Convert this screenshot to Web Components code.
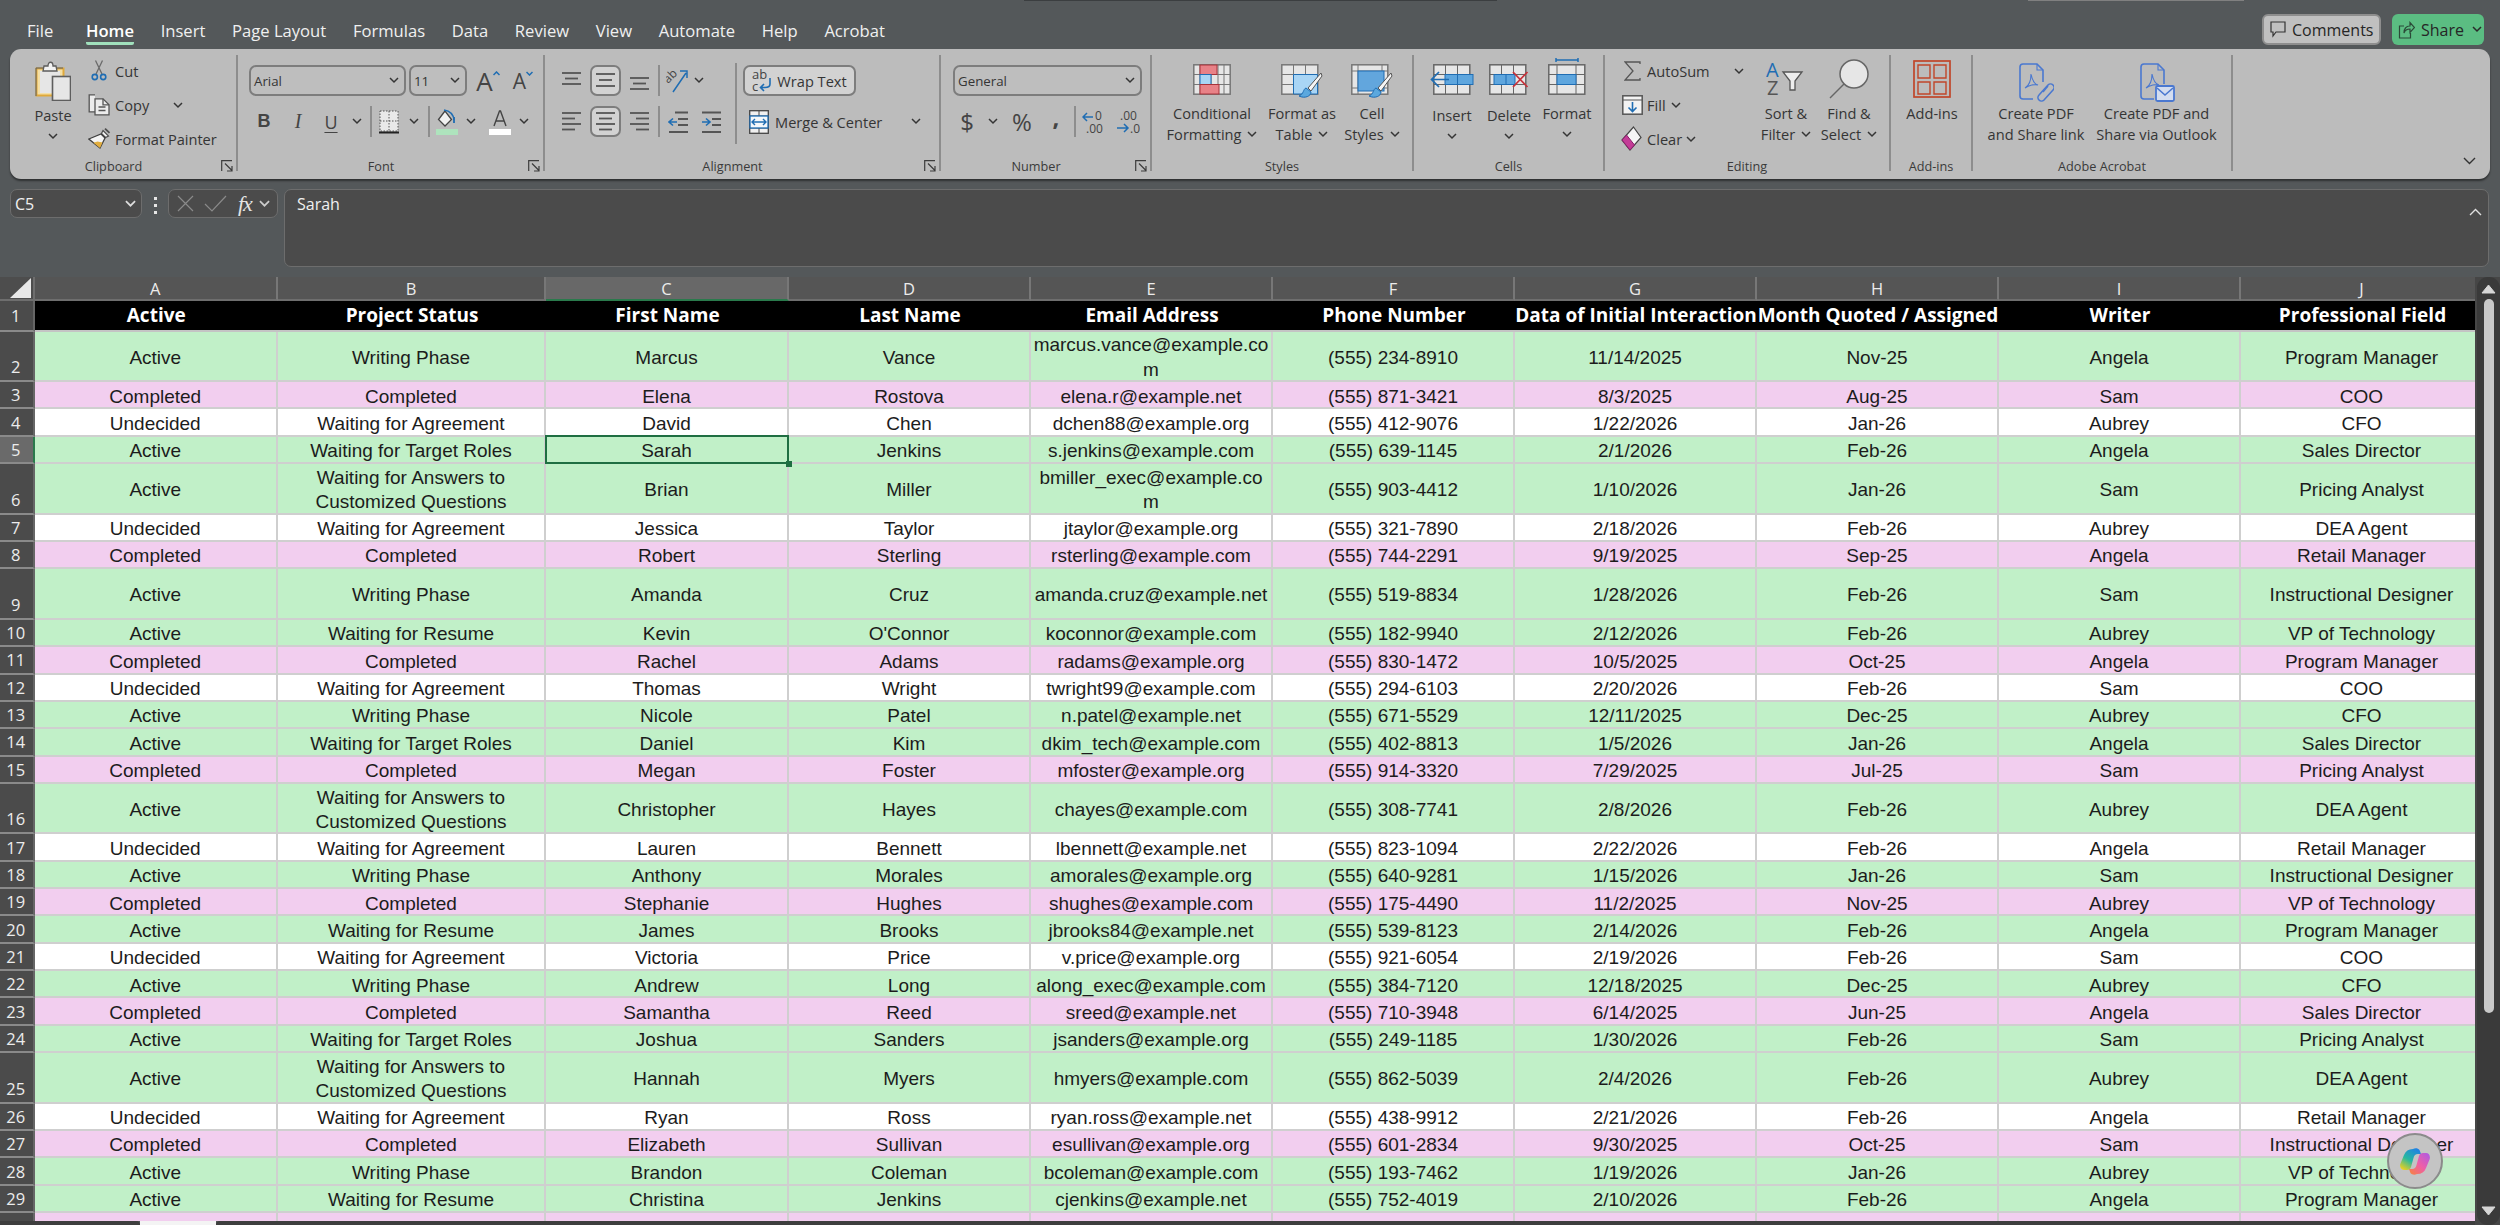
<!DOCTYPE html>
<html lang="en"><head><meta charset="utf-8"><title>Excel</title>
<style>
html,body{margin:0;height:1225px;overflow:hidden;background:#54585a}
body{font-family:"Open Sans","Liberation Sans",sans-serif}
xl-app{width:2500px;height:1225px}
</style></head><body>
<xl-app>
  <xl-tabbar></xl-tabbar>
  <xl-ribbon></xl-ribbon>
  <xl-formula cell="C5" value="Sarah"></xl-formula>
  <xl-sheet></xl-sheet>
</xl-app>
<script>
const INK='#353535',GR='#666',LT='#e6e6e6',BL='#1f6db3';
const CH=(c=INK)=>`<svg width="10" height="7" viewBox="0 0 10 7"><path d="M1 1l4 4 4-4" fill="none" stroke="${c}" stroke-width="1.5"/></svg>`;
const vsep=(h=31)=>`<i class="vs" style="height:${h}px"></i>`;

/* ---- layout helpers: a row of items placed by margins in flow ---- */
function line(h,x0,items,mt=0){
  let p=x0,s='';
  for(const [x,w,html,cls=''] of items){
    s+=`<span class="it ${cls}" style="margin-left:${x-p}px;width:${w}px">${html}</span>`;p=x+w;
  }
  return `<div class="ln" style="height:${h}px;margin-top:${mt}px">${s}</div>`;
}
function big(iconTop,icon,labels,lt=0){
  const ls=labels.map(l=>`<span class="bl">${l}</span>`).join('');
  return `<div class="big"><div class="bi" style="padding-top:${iconTop-55}px;height:${48-(iconTop-55)}px">${icon}</div><div class="bt" style="margin-top:${lt}px">${ls}</div></div>`;
}
const wc=(t)=>`${t}<span class="cg">${CH()}</span>`;

/* ---- icons ---- */
const I={
paste:`<svg width="36" height="40" viewBox="0 0 36 40"><path d="M1.5 7.5h27v27h-27z" fill="#f4dfa6" stroke="#e0a93a" stroke-width="2"/><path d="M1 7h27M1 7v28" stroke="#5c5c5c" stroke-width="1"/><rect x="5" y="10" width="20" height="22" fill="${LT}"/><path d="M9 5h4c0-5 5-5 5 0h3l1 5H8z" fill="#f2f2f2" stroke="#5c5c5c" stroke-width="1.3"/><rect x="17.5" y="15.5" width="18" height="24" fill="${LT}" stroke="#5e5e5e" stroke-width="1.6"/></svg>`,
cut:`<svg width="16" height="22" viewBox="0 0 16 22"><path d="M4.500 0.500L11 14M11.500 0.500L5 14" fill="none" stroke="#6a6a6a" stroke-width="1.300"/><circle cx="3.800" cy="17" r="2.600" fill="none" stroke="${BL}" stroke-width="1.600"/><circle cx="12.200" cy="17" r="2.600" fill="none" stroke="${BL}" stroke-width="1.600"/></svg>`,
copy:`<svg width="23" height="22" viewBox="0 0 23 22"><path d="M7 .8H1.200v17H7" fill="#ececec" stroke="#555" stroke-width="1.300"/><path d="M7 4.800h8l6 6v10H7z" fill="#ececec" stroke="#555" stroke-width="1.300"/><path d="M15 4.800v6h6M10.500 13h7M10.500 16.500h7" fill="none" stroke="#555" stroke-width="1.300"/></svg>`,
painter:`<svg width="23" height="22" viewBox="0 0 23 22"><path d="M15 2.500l5.500 5.500-3 1.500-4-4z" fill="#f4f4f4" stroke="#4f4f4f" stroke-width="1.200"/><path d="M17 .7l4.500 4.200" stroke="#4f4f4f" stroke-width="1.800"/><path d="M13 6l4 4-5 10L.8 11z" fill="#f4f4f4" stroke="#3d3d3d" stroke-width="1.200"/><path d="M5.500 14.800L12 20l2.500-5.500-5-1z" fill="#e3ae3e"/></svg>`,
launcher:`<svg width="12" height="12" viewBox="0 0 12 12"><path d="M.7 11V.7H11M4 3.500l7 7M6 11h5V6" fill="none" stroke="#3c3c3c" stroke-width="1.200"/></svg>`,
grow:`<span class="ga">A<svg width="7" height="5" viewBox="0 0 7 5"><path d="M.5 4l3-3 3 3" fill="none" stroke="${BL}" stroke-width="1.500"/></svg></span>`,
shrink:`<span class="ga sm">A<svg width="7" height="5" viewBox="0 0 7 5"><path d="M.5 1l3 3 3-3" fill="none" stroke="${BL}" stroke-width="1.500"/></svg></span>`,
borders:`<svg width="20" height="24" viewBox="0 0 20 24"><path d="M1 1h18v20H1zM1 11h18M10 1v20" fill="#e9e9e9" stroke="#555" stroke-dasharray="1.500 1.500"/><path d="M0 22.500h20" stroke="#222" stroke-width="2"/></svg>`,
fill:`<svg width="22" height="26" viewBox="0 0 22 26"><path d="M9 2L2.500 10.500 9 17l6.500-6.500z" fill="#f1f1f1" stroke="#444" stroke-width="1.300"/><path d="M8 1c6 1 9.500 5 10 10" fill="none" stroke="${BL}" stroke-width="1.500"/><path d="M18 8v6" stroke="${BL}" stroke-width="1.800"/><rect y="20" width="22" height="6" fill="#aee3bd"/></svg>`,
fontcolor:`<svg width="22" height="26" viewBox="0 0 22 26"><path d="M5 17L10.500 2h1L17 17M7 12h8" fill="none" stroke="#444" stroke-width="1.400"/><rect y="20" width="22" height="6" fill="#fff"/></svg>`,
wrap:`<svg width="20" height="26" viewBox="0 0 20 26"><text x="0" y="11" font-family="Open Sans" font-size="13" fill="#444">ab</text><text x="0" y="23" font-family="Open Sans" font-size="13" fill="#444">c</text><path d="M18 10v6c0 3-3 3.500-5 3.500H9M12 16l-3.500 3.500L12 23" fill="none" stroke="${BL}" stroke-width="1.600"/></svg>`,
merge:`<svg width="20" height="24" viewBox="0 0 20 24"><rect x=".7" y=".7" width="18.600" height="22.600" fill="#f0f0f0" stroke="#444" stroke-width="1.300"/><path d="M1 6h18M1 18h18M10 1v5M10 18v5" stroke="#444"/><rect x="1" y="6" width="18" height="12" fill="#f4f8fb" stroke="${BL}" stroke-width="1.300"/><path d="M3 12h14M6 9l-3 3 3 3M14 9l3 3-3 3" fill="none" stroke="${BL}" stroke-width="1.400"/></svg>`,
orient:`<svg width="22" height="24" viewBox="0 0 22 24"><text transform="translate(2 15) rotate(-45)" font-family="Open Sans" font-size="12" fill="#444">ab</text><path d="M7 23L20 4M14 2h7v7" fill="none" stroke="${BL}" stroke-width="1.500"/></svg>`,
indL:`<svg width="20" height="22" viewBox="0 0 20 22"><path d="M7 1.500h13M10 8h10M10 14h10M1 21h19" stroke="#555" stroke-width="1.800"/><path d="M1 11h8M5 7.500L1 11l4 3.500" fill="none" stroke="${BL}" stroke-width="1.600"/></svg>`,
indR:`<svg width="20" height="22" viewBox="0 0 20 22"><path d="M1 1.500h19M11 8h9M11 14h9M1 21h19" stroke="#555" stroke-width="1.800"/><path d="M1 11h8M5 7.500L9 11l-4 3.500" fill="none" stroke="${BL}" stroke-width="1.600"/></svg>`,
decL:`<svg width="24" height="24" viewBox="0 0 24 24"><text x="13" y="10" font-family="Open Sans" font-size="12" fill="#444">0</text><text x="4" y="23" font-family="Open Sans" font-size="12" fill="#444">.00</text><path d="M1 7h10M5 3L1 7l4 4" fill="none" stroke="${BL}" stroke-width="1.500"/></svg>`,
decR:`<svg width="24" height="24" viewBox="0 0 24 24"><text x="4" y="10" font-family="Open Sans" font-size="12" fill="#444">.00</text><text x="14" y="23" font-family="Open Sans" font-size="12" fill="#444">.0</text><path d="M1 18h11M8 14l4 4-4 4" fill="none" stroke="${BL}" stroke-width="1.500"/></svg>`,
cond:`<svg width="38" height="31" viewBox="0 0 38 31"><rect x=".8" y=".8" width="36.400" height="29.400" fill="${LT}" stroke="#777" stroke-width="1.500"/><path d="M7 1v29M18 1v29M25 1v29M31 1v29M1 10.500h36M1 20.500h36" stroke="#777"/><rect x="7" y="1" width="17" height="9.500" fill="#e88187" stroke="#a8323a"/><rect x="7" y="10.500" width="11" height="10" fill="#a9d5f5" stroke="${BL}"/><rect x="7" y="20.500" width="19" height="9.500" fill="#e88187" stroke="#a8323a"/></svg>`,
table:`<svg width="42" height="38" viewBox="0 0 42 38"><rect x=".8" y=".8" width="36" height="29.400" fill="${LT}" stroke="#777" stroke-width="1.500"/><path d="M12.500 1v29M24.500 1v29M1 10.500h36M1 20.500h36" stroke="#777"/><rect x="12.500" y="10.500" width="24" height="19.500" fill="#a9d5f5"/><path d="M12.500 10.500h24v19.500h-24z" fill="none" stroke="${BL}"/><path d="M40 9L27 24l3 3L41 12z" fill="#f5f5f5" stroke="#555"/><path d="M25 24c-3 1-2 6-7 8 6 3 12 0 12-4z" fill="#5ba8de" stroke="${BL}"/></svg>`,
cellst:`<svg width="42" height="38" viewBox="0 0 42 38"><rect x=".8" y=".8" width="36" height="29.400" fill="${LT}" stroke="#777" stroke-width="1.500"/><path d="M7 1v29M31 1v8M1 7h36M1 24h36" stroke="#777"/><rect x="7" y="7" width="26" height="20" fill="#62a6dd" stroke="${BL}"/><path d="M40 9L27 24l3 3L41 12z" fill="#f5f5f5" stroke="#555"/><path d="M25 24c-3 1-2 6-7 8 6 3 12 0 12-4z" fill="#5ba8de" stroke="${BL}"/></svg>`,
insert:`<svg width="44" height="31" viewBox="0 0 44 31"><rect x="3.800" y=".8" width="36" height="29.400" fill="${LT}" stroke="#666" stroke-width="1.500"/><path d="M15.500 1v29M27.500 1v29M4 10.500h36M4 20.500h36" stroke="#666"/><rect x="15" y="10.500" width="28" height="10" fill="#5ea6de" stroke="${BL}"/><path d="M27.500 10.500v10" stroke="${BL}"/><path d="M19 15.500H2M9 8l-7.500 7.500L9 23" fill="none" stroke="${BL}" stroke-width="1.700"/></svg>`,
del:`<svg width="40" height="31" viewBox="0 0 40 31"><rect x=".8" y=".8" width="36" height="29.400" fill="${LT}" stroke="#666" stroke-width="1.500"/><path d="M12.500 1v29M24.500 1v29M1 10.500h36M1 20.500h36" stroke="#666"/><rect x="5" y="10.500" width="21" height="10" fill="#5ea6de" stroke="${BL}"/><path d="M17 10.500v10" stroke="${BL}"/><path d="M24 8l14.500 15M38.500 8L24 23" stroke="#c8323a" stroke-width="1.700"/></svg>`,
format:`<svg width="38" height="38" viewBox="0 0 38 38"><path d="M8 1v4M30 1v4M8 3h22" stroke="${BL}" stroke-width="1.500"/><rect x=".8" y="7.800" width="36" height="29.400" fill="${LT}" stroke="#666" stroke-width="1.500"/><path d="M9 8v29M28 8v29M1 17.500h36M1 27.500h36" stroke="#666"/><rect x="9" y="17.500" width="19" height="10" fill="#5ea6de" stroke="${BL}"/></svg>`,
sigma:`<svg width="17" height="20" viewBox="0 0 17 20"><path d="M16 3V1H1l8 9-8 9h15v-2" fill="none" stroke="#555" stroke-width="1.300"/></svg>`,
fillIc:`<svg width="21" height="20" viewBox="0 0 21 20"><rect x=".8" y=".8" width="19.400" height="18.400" fill="#f3f3f3" stroke="#555" stroke-width="1.500"/><path d="M1 5h19" stroke="#555"/><path d="M10.500 7v9M6.500 12.500l4 4 4-4" fill="none" stroke="${BL}" stroke-width="1.600"/></svg>`,
clear:`<svg width="21" height="26" viewBox="0 0 21 26"><path d="M12.500 1L20 11.500 9 24 1 14z" fill="#f5f5f5" stroke="#444" stroke-width="1.200"/><path d="M5.500 9L13.500 19 9 24 1 14z" fill="#c43c97" stroke="#8a1f6a"/></svg>`,
sort:`<svg width="40" height="36" viewBox="0 0 40 36"><text x="0" y="16" font-family="Open Sans" font-size="20" fill="${BL}">A</text><text x="1" y="34" font-family="Open Sans" font-size="20" fill="#555">Z</text><path d="M17 11h19l-7 9v9h-5v-9z" fill="#ededed" stroke="#555" stroke-width="1.300"/></svg>`,
find:`<svg width="40" height="40" viewBox="0 0 40 40"><circle cx="25" cy="15" r="14" fill="${LT}" stroke="#666" stroke-width="1.500"/><path d="M15 25L1 39" stroke="#666" stroke-width="1.500"/></svg>`,
addins:`<svg width="38" height="38" viewBox="0 0 38 38"><rect x="1" y="1" width="36" height="36" fill="none" stroke="#c0462a" stroke-width="1.700"/><path d="M5 5h12v13H5zM21 5h12v13H21zM5 22h12v12H5zM21 22h12v12H21z" fill="none" stroke="#c0462a" stroke-width="1.400"/></svg>`,
pdfL:`<svg width="36" height="40" viewBox="0 0 36 40"><path d="M15 37H5a3 3 0 0 1-3-3V5a3 3 0 0 1 3-3h14l6 6v12" fill="none" stroke="#4a78d0" stroke-width="1.600"/><path d="M19 2v6h6M7 26c5-3 6-10 6-14 1 5 3 10 7 11-3-1-9 0-13 3z" fill="none" stroke="#4a78d0" stroke-width="1.100"/><path d="M21 33l9-10a3.500 3.500 0 0 1 5 5l-9 10a3.500 3.500 0 0 1-5-5z" fill="none" stroke="#4a78d0" stroke-width="1.600"/><path d="M25 30l5-6" stroke="#4a78d0" stroke-width="1.400"/></svg>`,
pdfM:`<svg width="36" height="40" viewBox="0 0 36 40"><path d="M15 37H5a3 3 0 0 1-3-3V5a3 3 0 0 1 3-3h14l6 6v14" fill="none" stroke="#4a78d0" stroke-width="1.600"/><path d="M19 2v6h6M7 26c5-3 6-10 6-14 1 5 3 10 7 11-3-1-9 0-13 3z" fill="none" stroke="#4a78d0" stroke-width="1.100"/><rect x="17" y="24" width="18" height="15" rx="1.500" fill="#d3ddf0" stroke="#4a78d0" stroke-width="1.800"/><path d="M18 26l8 7 8-7" fill="none" stroke="#4a78d0" stroke-width="1.600"/></svg>`
};
const aligned=(t)=>{
  const y={top:[1,6.5,12],mid:[2,8,14],bot:[6,11.500,17]}[t];
  let s='';
  y.forEach((v,i)=>{const ln=i==1?13:19;s+=`<path d="M${(19-ln)/2} ${v}h${ln}" stroke="#555" stroke-width="1.800"/>`});
  return `<svg width="19" height="18" viewBox="0 0 19 18">${s}</svg>`;
};
const halign=(a)=>{
  const rows=[19,13,19,13],y=[1,6.5,12,17.5];let s='';
  rows.forEach((ln,i)=>{const x=a==='l'?0:a==='r'?19-ln:(19-ln)/2;s+=`<path d="M${x} ${y[i]}h${ln}" stroke="#555" stroke-width="1.800"/>`});
  return `<svg width="19" height="19" viewBox="0 0 19 19">${s}</svg>`;
};

/* ---- elements ---- */
class XlApp extends HTMLElement{
  constructor(){super();this.attachShadow({mode:'open'}).innerHTML=`<style>:host{display:flex;flex-direction:column;color:#eee}</style><slot></slot>`}
}
class XlTabbar extends HTMLElement{
  constructor(){super();
    const tabs=['File','Home','Insert','Page Layout','Formulas','Data','Review','View','Automate','Help','Acrobat'];
    this.attachShadow({mode:'open'}).innerHTML=`<style>
    :host{display:block;height:49px;font-family:"Open Sans",sans-serif}
    .edge{display:flex;height:1px}
    .edge i{display:block;height:1px}
    .bar{display:flex;justify-content:space-between;height:48px}
    .tabs{display:flex;gap:26.7px;padding-left:27px}
    .t{height:22px;margin-top:19px;font-size:16.6px;line-height:22px;color:#f0f0f0;white-space:nowrap;border-bottom:0 solid}
    .t.first{margin-right:6px}
    .t.on{font-weight:600;color:#fff;border-bottom:3px solid #a0e0bc;border-radius:0 0 2px 2px}
    .act{display:flex;gap:11px;padding:13px 16px 0 0}
    .b{height:31px;box-sizing:border-box;border-radius:6px;font-size:16px;color:#262626;display:flex;align-items:center;gap:6px}
    .c{width:119px;background:#c0c0c0;border:2px solid #8e8e8e;padding-left:6px}
    .s{width:92px;background:#5bbd82;padding-left:6px}
    </style>
    <div class="edge"><i style="margin-left:1024px;width:473px;background:#3b3e40"></i><i style="margin-left:531px;width:216px;background:#808080"></i></div>
    <div class="bar"><div class="tabs">${tabs.map(t=>`<div class="t ${t==='Home'?'on':''} ${t==='File'?'first':''}">${t}</div>`).join('')}</div>
    <div class="act"><div class="b c"><svg width="16" height="17" viewBox="0 0 16 17"><path d="M1 1h14v10H6l-3 4v-4H1z" fill="none" stroke="#333" stroke-width="1.200"/></svg>Comments</div>
    <div class="b s"><svg width="17" height="18" viewBox="0 0 17 18"><path d="M6 5H1.500v12h11v-5M6 12c0-5 3-7 6-7V1.500l4.500 5-4.500 5V8c-3 0-5 1-6 4z" fill="none" stroke="#2b4a38" stroke-width="1.200"/></svg>Share<span style="margin-left:2px;display:flex">${CH('#2a2a2a')}</span></div></div></div>`;
  }
}
class XlGroup extends HTMLElement{
  constructor(){super();this.attachShadow({mode:'open'})}
  connectedCallback(){
    const L=this.hasAttribute('launcher');
    this.shadowRoot.innerHTML=`<style>
    :host{display:block;box-sizing:border-box;width:${this.getAttribute('w')}px;height:116px;border-right:2px solid #8d8d8d;flex:none}
    .body{height:101px;display:flow-root}
    .foot{display:flex;height:15px}
    .lab{flex:1;text-align:center;font-size:12.7px;line-height:20px;height:15px;color:#3a3a3a}
    .lau{width:19px;display:flex;justify-content:center;padding-top:4px}
    </style><div class="body"><slot></slot></div><div class="foot"><div class="lab">${this.getAttribute('label')}</div>${L?`<div class="lau">${I.launcher}</div>`:''}</div>`;
  }
}
class XlRibbon extends HTMLElement{
  constructor(){super();
    const sel=(txt)=>`<span class="cb"><span>${txt}</span>${CH()}</span>`;
    const press=(ic)=>`<span class="pr">${ic}</span>`;
    const t=(s)=>`<span class="tx">${s}</span>`;
    this.attachShadow({mode:'open'}).innerHTML=`<style>
    :host{display:flex;box-sizing:border-box;margin-left:10px;width:2480px;height:130px;padding-top:6px;background:#bcbcbc;border-radius:11px;box-shadow:0 2px 2px rgba(0,0,0,.45);font-family:"Open Sans",sans-serif;color:${INK};font-size:14.6px}
    .ln{display:flex;align-items:center;white-space:nowrap}
    .it{display:flex;align-items:center;justify-content:center;flex:none;height:100%}
    .it.l{justify-content:flex-start}
    .it.top{align-items:flex-start}
    .cols{display:flex}
    .vs{display:block;width:1.500px;background:#8d8d8d;flex:none}
    .cb{box-sizing:border-box;width:100%;height:100%;border:2px solid #7d7d7d;border-radius:7px;display:flex;align-items:center;justify-content:space-between;padding:0 5px 0 3px;font-size:13.3px;background:#bebebe}
    .pr{box-sizing:border-box;width:100%;height:100%;border:2px solid #7d7d7d;border-radius:7px;background:#d2d2d2;display:flex;align-items:center;justify-content:center;gap:4px}
    .big{display:flex;flex-direction:column;align-items:center;width:100%;height:100%}
    .bi{display:flex;align-items:flex-start;justify-content:center;flex:none}
    .bt{display:flex;flex-direction:column;align-items:center}
    .bl{height:21px;line-height:21px;white-space:nowrap;display:flex;align-items:center;font-size:14.6px}
    .cg{display:inline-flex;margin-left:6px}
    .ga{font-size:26px;line-height:26px;color:#444;display:flex;align-items:flex-start}
    .ga.sm{font-size:21px;line-height:26px}
    .ga svg{margin-top:3px}
    .bold{font-family:"Liberation Sans",sans-serif;font-weight:700;font-size:18px;color:#444}
    .ital{font-family:"Liberation Serif",serif;font-style:italic;font-size:20px;color:#444}
    .und{font-family:"Open Sans",sans-serif;font-size:18px;color:#444;text-decoration:underline;text-underline-offset:3px}
    .sym{font-size:24px;color:#444;font-family:"Open Sans",sans-serif}
    .end{flex:1;display:flex;justify-content:flex-end;align-items:flex-end;padding:0 14px 14px 0}
    </style>
    <xl-group w="228" label="Clipboard" launcher>
      <div class="cols">
        ${line(101,10,[[23,60,big(61,I.paste,[t('Paste'),CH()],2),'top']])}
        <div>
        ${line(34,83,[[91,16,I.cut],[115,60,t('Cut'),'l']],-1)}
        ${line(34,83,[[88,23,I.copy],[115,45,t('Copy'),'l'],[173,10,CH()]])}
        ${line(34,83,[[88,23,I.painter],[115,110,t('Format Painter'),'l']])}
        </div>
      </div>
    </xl-group>
    <xl-group w="307" label="Font" launcher>
      ${line(31,238,[[249,157,sel('Arial')],[409,58,sel('11')],[476,24,I.grow],[511,24,I.shrink]],10)}
      ${line(31,238,[[255,18,'<span class="bold">B</span>'],[289,18,'<span class="ital">I</span>'],[322,18,'<span class="und">U</span>'],[352,10,CH()],[370,1.5,vsep()],[379,20,I.borders],[409,10,CH()],[428,1.5,vsep()],[436,22,I.fill],[466,10,CH()],[489,22,I.fontcolor],[519,10,CH()]],10)}
    </xl-group>
    <xl-group w="396" label="Alignment" launcher>
      <div class="cols">
      <div style="width:190px">
      ${line(31,545,[[562,19,aligned('top')],[590,31,press(aligned('mid'))],[630,19,aligned('bot')],[658,1.5,vsep()],[666,22,I.orient],[694,10,CH()]],10)}
      ${line(31,545,[[562,19,halign('l')],[590,31,press(halign('c'))],[630,19,halign('r')],[658,1.5,vsep()],[668,20,I.indL],[701,20,I.indR]],10)}
      </div>
      <i class="vs" style="height:81px;margin-top:8px"></i>
      <div>
      ${line(31,736.5,[[743,113,`<span class="pr" style="gap:5px">${I.wrap}${t('Wrap Text')}</span>`]],10)}
      ${line(31,736.5,[[749,20,I.merge],[775,110,t('Merge &amp; Center'),'l'],[911,10,CH()]],10)}
      </div>
      </div>
    </xl-group>
    <xl-group w="211" label="Number" launcher>
      ${line(31,941,[[953,189,sel('General')]],10)}
      ${line(31,941,[[958,18,'<span class="sym">$</span>'],[988,10,CH()],[1010,24,'<span class="sym">%</span>'],[1050,12,'<span class="sym" style="font-weight:700;margin-top:-10px">,</span>'],[1074,1.5,vsep()],[1082,24,I.decL],[1116,24,I.decR]],10)}
    </xl-group>
    <xl-group w="262" label="Styles">
      ${line(101,1152,[[1167,90,big(64,I.cond,[t('Conditional'),wc('Formatting')]),'top'],[1267,70,big(64,I.table,[t('Format as'),wc('Table')]),'top'],[1342,60,big(64,I.cellst,[t('Cell'),wc('Styles')]),'top']])}
    </xl-group>
    <xl-group w="191" label="Cells">
      ${line(101,1414,[[1427,50,big(64,I.insert,[t('Insert'),CH()],2),'top'],[1481,56,big(64,I.del,[t('Delete'),CH()],2),'top'],[1541,52,big(57,I.format,[t('Format'),CH()]),'top']])}
    </xl-group>
    <xl-group w="286" label="Editing">
      <div class="cols">
      <div style="width:151px">
      ${line(34,1605,[[1624,17,I.sigma],[1647,70,t('AutoSum'),'l'],[1734,10,CH()]],-1)}
      ${line(34,1605,[[1622,21,I.fillIc],[1647,24,t('Fill'),'l'],[1671,10,CH()]])}
      ${line(34,1605,[[1621,21,I.clear],[1647,38,t('Clear'),'l'],[1686,10,CH()]])}
      </div>
      ${line(101,1756,[[1756,60,big(61,I.sort,[t('Sort &amp;'),wc('Filter')]),'top'],[1819,60,big(59,I.find,[t('Find &amp;'),wc('Select')]),'top']])}
      </div>
    </xl-group>
    <xl-group w="82" label="Add-ins">
      ${line(101,1891,[[1892,80,big(60,I.addins,[t('Add-ins')]),'top']])}
    </xl-group>
    <xl-group w="260" label="Adobe Acrobat">
      ${line(101,1973,[[1981,110,big(62,I.pdfL,[t('Create PDF'),t('and Share link')]),'top'],[2094,125,big(62,I.pdfM,[t('Create PDF and'),t('Share via Outlook')]),'top']])}
    </xl-group>
    <div class="end"><svg width="13" height="8" viewBox="0 0 13 8"><path d="M1 1l5.500 5.500L12 1" fill="none" stroke="#333" stroke-width="1.400"/></svg></div>`;
  }
}
class XlFormula extends HTMLElement{
  constructor(){super();this.attachShadow({mode:'open'})}
  connectedCallback(){
    this.shadowRoot.innerHTML=`<style>
    :host{display:flex;align-items:flex-start;height:98px;box-sizing:border-box;padding:10px 0 0 10px;font-family:"Open Sans",sans-serif;color:#f0f0f0;font-size:16px}
    .box{box-sizing:border-box;background:#4b4b4b;border:1.500px solid #6d6d6d;border-radius:7px;flex:none}
    .name{width:132px;height:29px;display:flex;align-items:center;justify-content:space-between;padding:0 4px 0 4px}
    .dots{width:26px;flex:none;display:flex;flex-direction:column;align-items:center;gap:4px;padding-top:8px}
    .dots i{display:block;width:3px;height:3px;background:#e6e6e6}
    .fx{width:110px;height:29px;display:flex;align-items:center;gap:9px;padding-left:7px}
    .fx b{font:italic 22px "Liberation Serif",serif;color:#e4e4e4;margin-left:2px;letter-spacing:-1px}
    .val{width:2205px;height:78px;margin-left:6px;padding:2px 0 0 12px;display:flex;justify-content:space-between;line-height:24px}
    .up{padding:6px 6px 0 0}
    </style>
    <div class="box name"><span>${this.getAttribute('cell')}</span>${CH('#ddd').replace('width="10" height="7"','width="13" height="8"')}</div>
    <div class="dots"><i></i><i></i><i></i></div>
    <div class="box fx"><svg width="19" height="19" viewBox="0 0 19 19"><path d="M2 2l15 15M17 2L2 17" stroke="#8a8a8a" stroke-width="1.200"/></svg><svg width="23" height="17" viewBox="0 0 23 17"><path d="M1 9l7 7L22 1" fill="none" stroke="#8a8a8a" stroke-width="1.200"/></svg><b>fx</b><span style="display:flex;margin-left:-3px">${CH('#ccc').replace('width="10" height="7"','width="13" height="8"')}</span></div>
    <div class="box val"><span>${this.getAttribute('value')}</span><span class="up"><svg width="13" height="8" viewBox="0 0 13 8"><path d="M1 7l5.500-5.500L12 7" fill="none" stroke="#e0e0e0" stroke-width="1.400"/></svg></span></div>`;
  }
}
const W1='Waiting for Answers to Customized Questions',WA='Waiting for Agreement',WT='Waiting for Target Roles',WR='Waiting for Resume',WP='Writing Phase';
const DATA=`Active|${WP}|Marcus|Vance|marcus.vance@example.co
m|(555) 234-8910|11/14/2025|Nov-25|Angela|Program Manager
Completed|Completed|Elena|Rostova|elena.r@example.net|(555) 871-3421|8/3/2025|Aug-25|Sam|COO
Undecided|${WA}|David|Chen|dchen88@example.org|(555) 412-9076|1/22/2026|Jan-26|Aubrey|CFO
Active|${WT}|Sarah|Jenkins|s.jenkins@example.com|(555) 639-1145|2/1/2026|Feb-26|Angela|Sales Director
Active|${W1}|Brian|Miller|bmiller_exec@example.co
m|(555) 903-4412|1/10/2026|Jan-26|Sam|Pricing Analyst
Undecided|${WA}|Jessica|Taylor|jtaylor@example.org|(555) 321-7890|2/18/2026|Feb-26|Aubrey|DEA Agent
Completed|Completed|Robert|Sterling|rsterling@example.com|(555) 744-2291|9/19/2025|Sep-25|Angela|Retail Manager
Active|${WP}|Amanda|Cruz|amanda.cruz@example.net|(555) 519-8834|1/28/2026|Feb-26|Sam|Instructional Designer
Active|${WR}|Kevin|O'Connor|koconnor@example.com|(555) 182-9940|2/12/2026|Feb-26|Aubrey|VP of Technology
Completed|Completed|Rachel|Adams|radams@example.org|(555) 830-1472|10/5/2025|Oct-25|Angela|Program Manager
Undecided|${WA}|Thomas|Wright|twright99@example.com|(555) 294-6103|2/20/2026|Feb-26|Sam|COO
Active|${WP}|Nicole|Patel|n.patel@example.net|(555) 671-5529|12/11/2025|Dec-25|Aubrey|CFO
Active|${WT}|Daniel|Kim|dkim_tech@example.com|(555) 402-8813|1/5/2026|Jan-26|Angela|Sales Director
Completed|Completed|Megan|Foster|mfoster@example.org|(555) 914-3320|7/29/2025|Jul-25|Sam|Pricing Analyst
Active|${W1}|Christopher|Hayes|chayes@example.com|(555) 308-7741|2/8/2026|Feb-26|Aubrey|DEA Agent
Undecided|${WA}|Lauren|Bennett|lbennett@example.net|(555) 823-1094|2/22/2026|Feb-26|Angela|Retail Manager
Active|${WP}|Anthony|Morales|amorales@example.org|(555) 640-9281|1/15/2026|Jan-26|Sam|Instructional Designer
Completed|Completed|Stephanie|Hughes|shughes@example.com|(555) 175-4490|11/2/2025|Nov-25|Aubrey|VP of Technology
Active|${WR}|James|Brooks|jbrooks84@example.net|(555) 539-8123|2/14/2026|Feb-26|Angela|Program Manager
Undecided|${WA}|Victoria|Price|v.price@example.org|(555) 921-6054|2/19/2026|Feb-26|Sam|COO
Active|${WP}|Andrew|Long|along_exec@example.com|(555) 384-7120|12/18/2025|Dec-25|Aubrey|CFO
Completed|Completed|Samantha|Reed|sreed@example.net|(555) 710-3948|6/14/2025|Jun-25|Angela|Sales Director
Active|${WT}|Joshua|Sanders|jsanders@example.org|(555) 249-1185|1/30/2026|Feb-26|Sam|Pricing Analyst
Active|${W1}|Hannah|Myers|hmyers@example.com|(555) 862-5039|2/4/2026|Feb-26|Aubrey|DEA Agent
Undecided|${WA}|Ryan|Ross|ryan.ross@example.net|(555) 438-9912|2/21/2026|Feb-26|Angela|Retail Manager
Completed|Completed|Elizabeth|Sullivan|esullivan@example.org|(555) 601-2834|9/30/2025|Oct-25|Sam|Instructional Designer
Active|${WP}|Brandon|Coleman|bcoleman@example.com|(555) 193-7462|1/19/2026|Jan-26|Aubrey|VP of Technology
Active|${WR}|Christina|Jenkins|cjenkins@example.net|(555) 752-4019|2/10/2026|Feb-26|Angela|Program Manager`;
const ROWS=DATA.replace(/\.co\nm\|/g,'.co\u2028m|').split('\n').map(l=>l.split('|').map(s=>s.replace('\u2028','\n')));
const HEAD=['Active','Project Status','First Name','Last Name','Email Address','Phone Number','Data of Initial Interaction','Month Quoted / Assigned','Writer','Professional Field'];
const TALL=new Set([2,6,9,16,25]);
class XlSheet extends HTMLElement{
  constructor(){super();
    const L='ABCDEFGHIJ'.split('');
    let c=`<div class="corner"><svg width="21" height="20" viewBox="0 0 21 20"><path d="M21 0V20H0z" fill="#e8e8e8"/></svg></div>`;
    L.forEach((l,i)=>c+=`<div class="ch ${i==2?'sel':''}">${l}</div>`);
    c+=`<div class="rh">1</div>`+HEAD.map(h=>`<div class="hd">${h}</div>`).join('');
    ROWS.forEach((r,i)=>{
      const n=i+2,cl={Active:'g',Completed:'p',Undecided:'w'}[r[0]];
      c+=`<div class="rh ${TALL.has(n)?'tall':''} ${n==5?'sel':''}">${n}</div>`;
      r.forEach((v,j)=>{
        const s=n==5&&j==2;
        c+=`<div class="c ${cl} ${s?'cur':''}">${v}${s?'<i class="sb"></i><i class="hnd"></i>':''}</div>`;
      });
    });
    c+=`<div class="rh"></div>`+L.map(()=>`<div class="c p"></div>`).join('');
    const rowH=[24,30.5];
    for(let n=2;n<=29;n++)rowH.push(TALL.has(n)?50.6:27.33);
    rowH.push(27.33);
    this.attachShadow({mode:'open'}).innerHTML=`<style>
    :host{display:flex;position:relative;height:948px;font-family:"Liberation Sans",Arial,sans-serif}
    .main{width:2475px;flex:none;display:flex;flex-direction:column}
    .grid{height:944px;overflow:hidden;display:grid;grid-template-columns:34.5px 243.5px 268px 243px 242px 242px 242px 242px 242px 242px 243px;grid-template-rows:${rowH.map(h=>h+'px').join(' ')};width:2475px}
    .grid>div{box-sizing:border-box;display:flex;align-items:center;justify-content:center;min-width:0}
    .corner{background:#4d4d4d;border-right:2px solid #6e6e6e;border-bottom:2px solid #6e6e6e;justify-content:flex-end!important;padding-right:2px}
    .ch{background:#555;font:16.5px "Open Sans",sans-serif;color:#ececec;border-right:2px solid #777;border-bottom:2px solid #6e6e6e}
    .ch.sel{background:#686868;border-bottom:2px solid #2a7a4c}
    .rh{background:#4b4b4b;font:16.5px "Open Sans",sans-serif;color:#ececec;border-right:2px solid #666;border-bottom:2px solid #8a8a8a;padding-right:1px}
    .rh.tall{align-items:flex-end!important;padding-bottom:2px}
    .rh.sel{background:#6a6a6a;border-right:2px solid #2a7a4c}
    .hd{background:#000;color:#fff;font:700 19px "Open Sans",sans-serif;border-bottom:2px solid #c4c4c4;white-space:nowrap}
    .c{font-size:19px;line-height:24.500px;color:#1c1c1c;text-align:center;white-space:pre-line;border-right:2px solid #cfcfcf;border-bottom:2px solid #cfcfcf;position:relative;padding-top:4px}
    .g{background:#c1f0c8}.p{background:#f2ceef}.w{background:#fff}
    .cur{z-index:2}
    .sb{position:absolute;inset:-2px -2px -2px -1px;border:2.500px solid #1f6e42;pointer-events:none}
    .hnd{position:absolute;right:-5px;bottom:-5px;width:6px;height:6px;background:#1f6e42}
    .btm{height:4px;display:flex}
    .btm i{display:block;height:4px}
    .bar{width:25px;flex:none;background:#464646;display:flex;justify-content:flex-end}
    .track{width:23px;background:#3a3a3a;border-radius:11px;display:flex;flex-direction:column;align-items:center;padding-top:7px;box-sizing:border-box}
    .thumb{width:10px;height:714px;margin-top:5px;background:#c9c9c9;border-radius:5px}
    .spc{flex:1}
    .dn{margin-bottom:9px}
    xl-copilot{position:absolute;left:2387px;top:856px;z-index:3}
    </style>
    <div class="main"><div class="grid">${c}</div>
    <div class="btm"><i style="width:140px;background:#3e3e3e;border-radius:0 5px 0 0"></i><i style="width:76px;background:#f4f4f4"></i><i style="flex:1;background:#3e3e3e;border-radius:5px 0 0 0"></i></div></div>
    <div class="bar"><div class="track"><svg width="15" height="10" viewBox="0 0 15 10"><path d="M7.500 1L14 9H1z" fill="#d6d6d6" stroke="#d6d6d6" stroke-linejoin="round"/></svg><div class="thumb"></div><div class="spc"></div><svg class="dn" width="15" height="10" viewBox="0 0 15 10"><path d="M1 1h13L7.500 9z" fill="#d6d6d6" stroke="#d6d6d6" stroke-linejoin="round"/></svg></div></div>
    <xl-copilot></xl-copilot>`;
  }
}
class XlCopilot extends HTMLElement{
  constructor(){super();this.attachShadow({mode:'open'}).innerHTML=`<style>
    :host{display:flex;align-items:center;justify-content:center;box-sizing:border-box;width:56px;height:56px;border-radius:50%;background:#c4c4c4;border:2px solid #8b8b8b}
    </style>
    <svg width="30" height="27" viewBox="0 0 30 27"><defs>
    <linearGradient id="a" x1=".8" y1="0" x2=".2" y2="1"><stop offset="0" stop-color="#1f7fe6"/><stop offset=".55" stop-color="#25b8a0"/><stop offset="1" stop-color="#e8cf22"/></linearGradient>
    <linearGradient id="b" x1="1" y1="0" x2="0" y2="1"><stop offset="0" stop-color="#f7853a"/><stop offset=".5" stop-color="#ee5ea8"/><stop offset="1" stop-color="#a95ae6"/></linearGradient></defs>
    <path id="s" d="M13 1C15 0 18 0 19.500 2L21 6H18C15.500 6 14 7.500 13.500 10L11 19C10.500 21 9 22 7 22H4C1 22-.500 19 .300 16L4 7C5.500 3 8.500 1 13 1Z" fill="url(#a)"/>
    <path d="M13 1C15 0 18 0 19.500 2L21 6H18C15.500 6 14 7.500 13.500 10L11 19C10.500 21 9 22 7 22H4C1 22-.500 19 .300 16L4 7C5.500 3 8.500 1 13 1Z" transform="rotate(180 15 13.500)" fill="url(#b)"/></svg>`;
  }
}
customElements.define('xl-app',XlApp);
customElements.define('xl-tabbar',XlTabbar);
customElements.define('xl-group',XlGroup);
customElements.define('xl-ribbon',XlRibbon);
customElements.define('xl-formula',XlFormula);
customElements.define('xl-copilot',XlCopilot);
customElements.define('xl-sheet',XlSheet);
</script>
</body></html>
